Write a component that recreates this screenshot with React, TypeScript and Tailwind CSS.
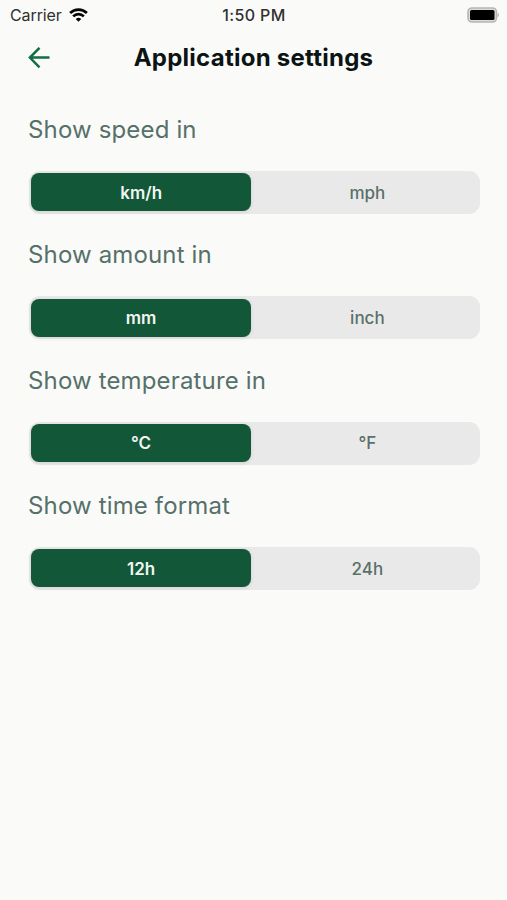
import * as React from "react";
import { useState } from "react";

interface Setting {
  id: string;
  label: string;
  options: string[];
}

const settings: Setting[] = [
  { id: "speed", label: "Show speed in", options: ["km/h", "mph"] },
  { id: "amount", label: "Show amount in", options: ["mm", "inch"] },
  { id: "temperature", label: "Show temperature in", options: ["°C", "°F"] },
  { id: "time", label: "Show time format", options: ["12h", "24h"] },
];

const StatusBar = () => (
  <div className="grid h-[30px] grid-cols-3 items-center pr-[8px] pl-[9px] text-[16px] text-[#303030]">
    <div className="flex items-center gap-[7px]">
      <span className="pl-px tracking-[-0.1px]">Carrier</span>
      <svg width="19" height="14" viewBox="0 0 20 15" fill="none" stroke="#050505" strokeWidth="2.9">
        <path d="M1 5.4a12.8 12.8 0 0 1 18 0" />
        <path d="M4.3 9a8.1 8.1 0 0 1 11.4 0" />
        <path d="M10 14.8L7 11.8a4.3 4.3 0 0 1 6 0z" fill="#050505" stroke="none" />
      </svg>
    </div>
    <span className="text-center font-medium tracking-[0.35px]">1:50 PM</span>
    <svg className="justify-self-end" width="32" height="16" viewBox="0 0 32 16" fill="none">
      <rect x="1" y="1" width="28.5" height="14" rx="4" fill="#dcdcdb" stroke="#b5b5b5" strokeWidth="1.6" />
      <rect x="3" y="3" width="24.5" height="10" rx="1.5" fill="#000" />
      <path d="M30.7 6c1.6.7 1.6 3.3 0 4z" fill="#aaa" />
    </svg>
  </div>
);

const Header = () => (
  <header className="grid h-[55px] grid-cols-[28px_1fr_28px] items-center px-[25px]">
    <button aria-label="Back" className="flex justify-center">
      <svg width="22" height="22" viewBox="0 0 22 22" fill="none" stroke="#126e43" strokeWidth="2.5">
        <path d="M21.5 10.6H2M11.5 0.8L1.9 10.6l9.6 9.8" />
      </svg>
    </button>
    <h1 className="text-center text-[24px] font-bold tracking-[0.25px] text-[#0c1315]">
      Application settings
    </h1>
  </header>
);

const SegmentedControl = ({ options }: { options: string[] }) => {
  const [selected, setSelected] = useState(0);

  return (
    <div className="grid h-[43px] grid-cols-2 gap-x-[6px] rounded-[11px] bg-[#e9e9e9] px-[2.5px] pt-[2.5px] pb-[2.5px]">
      {options.map((option, i) => (
        <button
          key={option}
          onClick={() => setSelected(i)}
          className={
            i === selected
              ? "rounded-[8px] bg-[#125838] pt-[2px] text-[17px] font-semibold text-[#f1f6f2] shadow-[0_1px_4px_rgba(0,0,0,0.1)]"
              : "rounded-[8px] pt-[2px] text-[17px] font-medium text-[#5b7069]"
          }
        >
          {option}
        </button>
      ))}
    </div>
  );
};

export default function App() {
  return (
    <div className="min-h-screen bg-[#fafbf9] font-['Inter',sans-serif]">
      <StatusBar />
      <Header />
      <main className="flex flex-col gap-[22.4px] pt-[25.8px] pr-[27px] pl-[28.5px]">
        {settings.map((setting) => (
          <section key={setting.id}>
            <h2 className="mb-[23px] -ml-[0.5px] pt-px text-[24px] leading-[36px] tracking-[0.15px] text-[#56706a]">
              {setting.label}
            </h2>
            <SegmentedControl options={setting.options} />
          </section>
        ))}
      </main>
    </div>
  );
}
